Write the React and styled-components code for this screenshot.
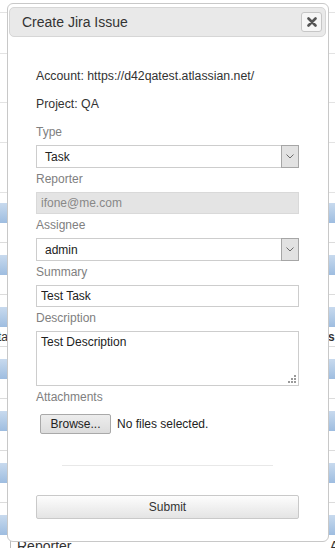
import React from 'react'
import styled, { createGlobalStyle } from 'styled-components'

const GlobalStyle = createGlobalStyle`
  html, body {
    margin: 0;
    padding: 0;
    background: #fff;
  }
  body {
    font-family: "Liberation Sans", Arial, sans-serif;
    overflow: hidden;
  }
`

const Page = styled.div`
  position: relative;
  width: 335px;
  height: 548px;
  overflow: hidden;
  background: #fff;
`

const TopRow = styled.div`
  height: ${p => p.h}px;
  border-bottom: 1px solid #e3e3e3;
`

const Spacer = styled.div`
  height: ${p => p.h}px;
`

const BlueStrip = styled.div`
  height: 20px;
  background: linear-gradient(#c8daee, #9ebde0);
`

const DataRow = styled.div`
  height: 19px;
  border-bottom: 1px solid #dcdcdc;
  display: flex;
  align-items: center;
  justify-content: space-between;
  font-size: 12px;
  color: #333;
  white-space: nowrap;
`

const HeadCell = styled.div`
  height: 19px;
  margin-left: 10px;
  padding-left: 6px;
  border-left: 1px solid #bbb;
  display: flex;
  align-items: flex-end;
  justify-content: space-between;
  font-size: 14px;
  color: #333;
`

const Cut = styled.span`
  margin: ${p => p.m};
`

const Dialog = styled.div`
  position: absolute;
  top: 3px;
  left: 7px;
  width: 322px;
  height: 539px;
  box-sizing: border-box;
  border: 1px solid #c8c8c8;
  border-radius: 6px;
  background: #fff;
  padding: 3px 2px 0 1px;
`

const TitleBar = styled.div`
  height: 30px;
  box-sizing: border-box;
  border: 1px solid #d6d6d6;
  border-radius: 5px;
  background: #e9e9e9;
  display: flex;
  align-items: center;
  justify-content: space-between;
  padding: 0 3px 0 12px;
  font-size: 14px;
  color: #333;
`

const CloseButton = styled.button`
  width: 21px;
  height: 20px;
  padding: 0;
  box-sizing: border-box;
  border: 1px solid #c6c6c6;
  border-radius: 3px;
  background: #f6f6f6;
  display: flex;
  align-items: center;
  justify-content: center;
`

const Body = styled.div`
  padding: 32px 27px 0 27px;
`

const InfoLine = styled.div`
  font-size: 12.3px;
  line-height: 14px;
  color: #333;
  margin-bottom: 14px;
`

const Field = styled.div`
  margin-bottom: 4px;
`

const Label = styled.div`
  font-size: 12px;
  line-height: 14px;
  color: #808080;
  margin-bottom: 6px;
`

const SelectBox = styled.div`
  height: 23px;
  box-sizing: border-box;
  border: 1px solid #cdcdcd;
  background: #fff;
  display: flex;
  align-items: stretch;
`

const SelectValue = styled.div`
  flex: 1;
  display: flex;
  align-items: center;
  padding-left: 8px;
  font-size: 12px;
  color: #222;
`

const ArrowBox = styled.div`
  width: 18px;
  margin: -1px -1px -1px 0;
  box-sizing: border-box;
  border: 1px solid #a6a6a6;
  background: #e2e2e2;
  display: flex;
  align-items: center;
  justify-content: center;
`

const TextInput = styled.input`
  display: block;
  width: 100%;
  height: 22px;
  box-sizing: border-box;
  margin: 0;
  border: 1px solid ${p => (p.disabled ? '#d9d9d9' : '#cdcdcd')};
  background: ${p => (p.disabled ? '#e4e4e4' : '#fff')};
  padding: 0 4px;
  font-family: inherit;
  font-size: 12px;
  color: ${p => (p.disabled ? '#888' : '#222')};
  outline: none;
`

const AreaWrap = styled.div`
  position: relative;
  height: 55px;
`

const TextArea = styled.textarea`
  display: block;
  width: 100%;
  height: 100%;
  box-sizing: border-box;
  margin: 0;
  border: 1px solid #cdcdcd;
  padding: 3px 4px;
  resize: none;
  font-family: inherit;
  font-size: 12px;
  line-height: 14px;
  color: #222;
  outline: none;
`

const Grip = styled.svg`
  position: absolute;
  right: 3px;
  bottom: 3px;
`

const FileRow = styled.div`
  margin-top: 10px;
  padding-left: 4px;
  display: flex;
  align-items: center;
  font-size: 12px;
  color: #222;
`

const BrowseButton = styled.button`
  width: 71px;
  height: 20px;
  padding: 0;
  box-sizing: border-box;
  border: 1px solid #a9a9a9;
  border-radius: 2px;
  background: linear-gradient(#ededed, #dcdcdc);
  font-family: inherit;
  font-size: 12px;
  color: #222;
  margin-right: 6px;
`

const Divider = styled.div`
  height: 1px;
  background: #e8e8e8;
  margin: 31px 26px 29px 26px;
`

const SubmitButton = styled.button`
  display: block;
  width: 100%;
  height: 24px;
  box-sizing: border-box;
  border: 1px solid #c9c9c9;
  border-radius: 2px;
  background: linear-gradient(#fdfdfd, #e4e4e4);
  font-family: inherit;
  font-size: 12px;
  color: #333;
`

const Chevron = () => (
  <svg width="8" height="5" viewBox="0 0 8 5">
    <path d="M0.5 0.5 L4 4 L7.5 0.5" fill="none" stroke="#6a6a6a" strokeWidth="1" />
  </svg>
)

const Select = ({ value }) => (
  <SelectBox>
    <SelectValue>{value}</SelectValue>
    <ArrowBox>
      <Chevron />
    </ArrowBox>
  </SelectBox>
)

const groups = [0, 1, 2, 3, 4, 5]

export default function App() {
  return (
    <>
      <GlobalStyle />
      <Page>
        <TopRow h={12} />
        <TopRow h={40} />
        <TopRow h={48} />
        <TopRow h={39} />
        <TopRow h={49} />
        <Spacer h={10} />
        {groups.map(i => (
          <React.Fragment key={i}>
            <BlueStrip />
            <DataRow>
              {i === 2 && (
                <>
                  <Cut m="0 0 0 -2px">ta</Cut>
                  <Cut m="0 -3px 0 0">
                    <b>si</b>
                  </Cut>
                </>
              )}
            </DataRow>
            <Spacer h={12} />
          </React.Fragment>
        ))}
        <BlueStrip />
        <HeadCell>
          <span>Reporter</span>
          <Cut m="0 -4px 0 0">A</Cut>
        </HeadCell>

        <Dialog>
          <TitleBar>
            <span>Create Jira Issue</span>
            <CloseButton>
              <svg width="10" height="10" viewBox="0 0 10 10">
                <path d="M1.5 1.5 L8.5 8.5 M8.5 1.5 L1.5 8.5" stroke="#555" strokeWidth="2.6" strokeLinecap="round" />
              </svg>
            </CloseButton>
          </TitleBar>
          <Body>
            <InfoLine>Account: https://d42qatest.atlassian.net/</InfoLine>
            <InfoLine>Project: QA</InfoLine>
            <Field>
              <Label>Type</Label>
              <Select value="Task" />
            </Field>
            <Field>
              <Label>Reporter</Label>
              <TextInput disabled defaultValue="ifone@me.com" />
            </Field>
            <Field>
              <Label>Assignee</Label>
              <Select value="admin" />
            </Field>
            <Field>
              <Label>Summary</Label>
              <TextInput defaultValue="Test Task" />
            </Field>
            <Field>
              <Label>Description</Label>
              <AreaWrap>
                <TextArea defaultValue="Test Description" />
                <Grip width="8" height="8" viewBox="0 0 8 8">
                  <g fill="#9a9a9a">
                    <rect x="6" y="0" width="2" height="2" />
                    <rect x="3" y="3" width="2" height="2" />
                    <rect x="6" y="3" width="2" height="2" />
                    <rect x="0" y="6" width="2" height="2" />
                    <rect x="3" y="6" width="2" height="2" />
                    <rect x="6" y="6" width="2" height="2" />
                  </g>
                </Grip>
              </AreaWrap>
            </Field>
            <Field>
              <Label>Attachments</Label>
              <FileRow>
                <BrowseButton>Browse...</BrowseButton>
                <span>No files selected.</span>
              </FileRow>
            </Field>
            <Divider />
            <SubmitButton>Submit</SubmitButton>
          </Body>
        </Dialog>
      </Page>
    </>
  )
}
